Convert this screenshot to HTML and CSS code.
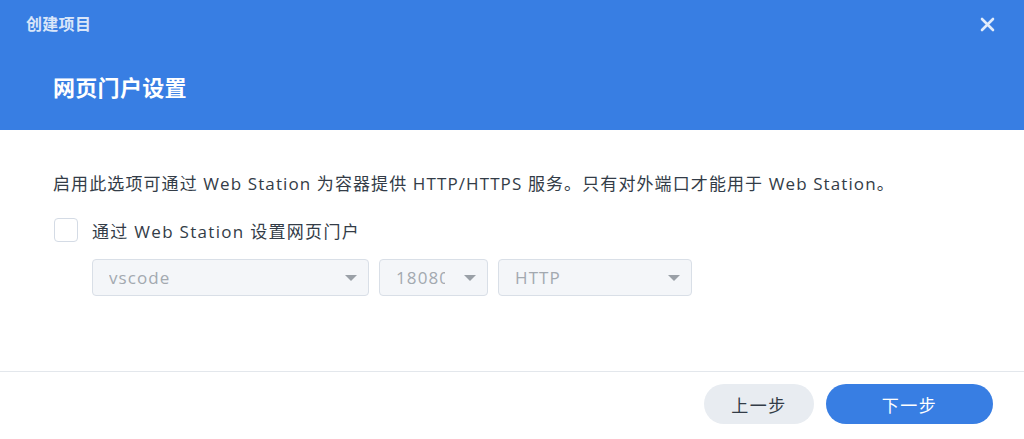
FILE: index.html
```html
<!DOCTYPE html>
<html lang="zh">
<head>
<meta charset="utf-8">
<title>创建项目</title>
<link rel="stylesheet" href="styles.css">
</head>
<body>
<div class="dialog">
  <header class="header">
    <div class="topbar">
      <span class="app-title">创建项目</span>
      <button class="close" aria-label="关闭">
        <svg width="15" height="15" viewBox="0 0 15 15"><path d="M2 2 L13 13 M13 2 L2 13" stroke="currentColor" stroke-width="2.6" stroke-linecap="round"/></svg>
      </button>
    </div>
    <h1 class="step-title">网页门户设置</h1>
  </header>
  <main class="content">
    <p class="desc">启用此选项可通过 Web Station 为容器提供 HTTP/HTTPS 服务。只有对外端口才能用于 Web Station。</p>
    <label class="check-row">
      <span class="checkbox"></span>
      <span class="check-label">通过 Web Station 设置网页门户</span>
    </label>
    <div class="selects">
      <div class="select w-name"><span class="val">vscode</span><span class="caret"></span></div>
      <div class="select w-port"><span class="val">18080</span><span class="caret"></span></div>
      <div class="select w-proto"><span class="val">HTTP</span><span class="caret"></span></div>
    </div>
  </main>
  <footer class="footer">
    <button class="btn btn-prev">上一步</button>
    <button class="btn btn-next">下一步</button>
  </footer>
</div>
</body>
</html>
```
FILE: styles.css
```css
* { box-sizing: border-box; }
html, body { margin: 0; padding: 0; }
body {
  width: 1024px;
  height: 439px;
  background: #fff;
  font-family: "Open Sans", "Noto Sans CJK SC", sans-serif;
  color: #333c47;
  overflow: hidden;
  letter-spacing: 1.1px;
}
.dialog { display: flex; flex-direction: column; height: 439px; }
.header {
  background: #387ee3;
  height: 130px;
  padding: 0 0 0 26px;
}
.topbar {
  display: flex;
  align-items: center;
  justify-content: space-between;
  height: 48px;
}
.app-title {
  font-size: 16px;
  font-weight: 600;
  color: rgba(255,255,255,0.82);
  line-height: 48px;
  letter-spacing: 0.3px;
}
.close {
  border: 0;
  background: none;
  color: rgba(255,255,255,0.85);
  padding: 0;
  width: 15px;
  height: 15px;
  margin-right: 29px;
  display: flex;
}
.step-title {
  margin: 25px 0 0 27px;
  font-size: 22px;
  font-weight: 700;
  color: #fff;
  line-height: 28px;
  letter-spacing: 0.3px;
}
.content {
  flex: 1;
  padding: 41px 0 0 53px;
}
.desc {
  margin: 0;
  font-size: 17px;
  line-height: 26px;
}
.check-row {
  display: flex;
  align-items: center;
  margin-top: 20px;
  height: 26px;
}
.checkbox {
  width: 24px;
  height: 24px;
  border: 1px solid #d4dbe5;
  border-radius: 4px;
  background: #fff;
  margin-left: 1px;
}
.check-label {
  margin-left: 14px;
  font-size: 17px;
  letter-spacing: 1.3px;
}
.selects {
  display: flex;
  gap: 10px;
  margin: 16px 0 0 39px;
}
.select {
  height: 37px;
  background: #f4f6f9;
  border: 1px solid #d9dfe7;
  border-radius: 4px;
  display: flex;
  align-items: center;
  justify-content: space-between;
  padding: 0 11px 0 16px;
  overflow: hidden;
}
.val {
  font-size: 17px;
  color: #a3a9b0;
  white-space: nowrap;
  overflow: hidden;
}
.w-name { width: 277px; }
.w-port { width: 109px; }
.w-port .val { width: 49px; }
.w-proto { width: 194px; }
.caret {
  width: 0; height: 0;
  border-left: 6px solid transparent;
  border-right: 6px solid transparent;
  border-top: 6px solid #9aa0a7;
  flex-shrink: 0;
}
.footer {
  border-top: 1px solid #e3e7ec;
  height: 68px;
  display: flex;
  justify-content: flex-end;
  align-items: flex-start;
  gap: 12px;
  padding: 12px 31px 0 0;
}
.btn {
  height: 40px;
  border: 0;
  border-radius: 20px;
  font-family: "Noto Sans CJK SC", sans-serif;
  font-size: 17px;
  letter-spacing: 1.5px;
}
.btn-prev { width: 110px; background: #e8ecf1; color: #333c47; }
.btn-next { width: 167px; background: #387ee3; color: #fff; }
```
